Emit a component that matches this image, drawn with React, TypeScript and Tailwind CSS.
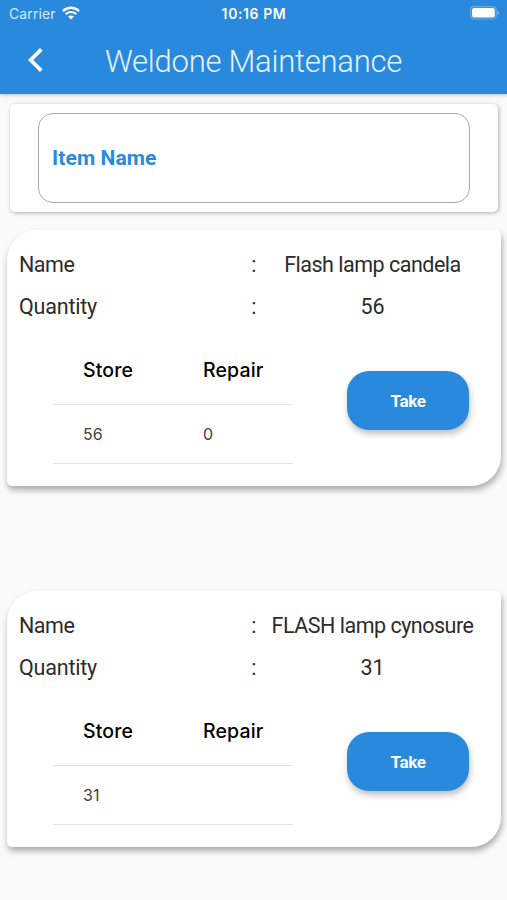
const items = [
  { name: "Flash lamp candela", quantity: "56", store: "56", repair: "0" },
  { name: "FLASH lamp cynosure", quantity: "31", store: "31", repair: "" },
];

function StatusBar() {
  return (
    <div className="grid grid-cols-3 items-center h-[26px] pl-[9px] pr-[7px] font-['Inter',sans-serif]">
      <div className="flex items-center gap-1.5 text-[14px] text-[#d3e9fb]">
        <span className="w-[47px] pt-px whitespace-nowrap tracking-[0.1px]">Carrier</span>
        <svg width="18" height="14" viewBox="0 0 18 14" fill="none" stroke="white">
          <path d="M0.9 5.1C5.5 0.6 12.5 0.6 17.1 5.1" strokeWidth="2.3" />
          <path d="M3.8 8.1C6.7 5.3 11.3 5.3 14.2 8.1" strokeWidth="2.2" />
          <path d="M9 13.5L6 10.5C7.6 9 10.4 9 12 10.5Z" fill="white" stroke="none" />
        </svg>
      </div>
      <span className="pt-px pr-px text-center text-[14px] font-semibold tracking-[0.6px] whitespace-nowrap text-white">
        10:16 PM
      </span>
      <svg className="justify-self-end" width="30" height="14" viewBox="0 0 30 14">
        <rect x="0.6" y="0.6" width="25.6" height="12.4" rx="3.5" fill="none" stroke="#6aabe7" strokeWidth="1.2" />
        <rect x="2" y="2" width="22.8" height="9.6" rx="2" fill="white" />
        <path d="M27.5 4.7C29.5 5.4 29.5 8.2 27.5 8.9Z" fill="#82b9eb" />
      </svg>
    </div>
  );
}

function Header() {
  return (
    <header className="relative h-[94px] bg-[#2989dd] shadow-[0_1px_4px_rgba(0,0,0,0.25)]">
      <StatusBar />
      <div className="flex items-center h-[67px] pl-7">
        <svg width="15" height="24" viewBox="0 0 15 24" fill="none" stroke="white" strokeWidth="3.8">
          <path d="M13.3 1.3L2.6 12L13.3 22.7" />
        </svg>
        <h1 className="ml-[62px] pt-[3px] text-[31px] leading-none font-light tracking-[-0.25px] whitespace-nowrap text-[#e4f3ff]">
          Weldone Maintenance
        </h1>
      </div>
    </header>
  );
}

function ItemCard({ item }: { item: (typeof items)[number] }) {
  return (
    <div className="h-[256px] ml-[7px] mr-1.5 pt-3.5 bg-white rounded-[5px] rounded-tl-[30px] rounded-br-[30px] shadow-[1px_4px_6px_rgba(0,0,0,0.32)]">
      <div className="grid grid-cols-[228px_13px_1fr] pl-3 pr-4 text-[21.5px] leading-[42px] tracking-[-0.5px] text-[#2c2c2c]">
        <span>Name</span>
        <span className="text-center">:</span>
        <span className="text-center whitespace-nowrap">{item.name}</span>
        <span className="tracking-[-0.2px]">Quantity</span>
        <span className="text-center">:</span>
        <span className="text-center tracking-normal">{item.quantity}</span>
      </div>
      <div className="flex pl-[46px] pt-2 font-['Inter',sans-serif]">
        <table className="w-60 h-[127px] table-fixed text-left">
          <thead>
            <tr className="h-[68px] border-b border-[#e3e3e3] text-[19.5px] tracking-[0.15px] text-black">
              <th className="pl-[30px] pt-0.5 font-medium">Store</th>
              <th className="pl-[30px] pt-0.5 font-medium">Repair</th>
            </tr>
          </thead>
          <tbody>
            <tr className="h-[59px] border-b border-[#e3e3e3] text-[16px] text-[#3f3f3f]">
              <td className="pl-[30px]">{item.store}</td>
              <td className="pl-[30px]">{item.repair}</td>
            </tr>
          </tbody>
        </table>
        <button
          type="button"
          className="ml-[54px] mt-[35px] w-[122px] h-[59px] rounded-[22px] bg-[#2989dd] pt-0.5 font-['Roboto',sans-serif] text-[17px] font-bold tracking-[-0.4px] text-white shadow-[1px_4px_6px_rgba(0,0,0,0.25)]"
        >
          Take
        </button>
      </div>
    </div>
  );
}

export default function App() {
  return (
    <div className="h-[900px] overflow-hidden bg-[#fafafa] font-['Roboto',sans-serif]">
      <Header />
      <div className="mt-2.5 ml-2.5 mr-[9px] h-[108px] px-7 pt-[9px] bg-white rounded-[5px] shadow-[1px_1px_4px_rgba(0,0,0,0.3)]">
        <div className="flex items-center w-[432px] h-[90px] pl-[13px] pt-0.5 border border-[#a8a8a8] rounded-[15px] text-[21px] font-bold tracking-[0.1px] text-[#2989dd]">
          Item Name
        </div>
      </div>
      <div className="flex flex-col gap-[105px] mt-[18px]">
        {items.map((item) => (
          <ItemCard key={item.name} item={item} />
        ))}
      </div>
    </div>
  );
}
